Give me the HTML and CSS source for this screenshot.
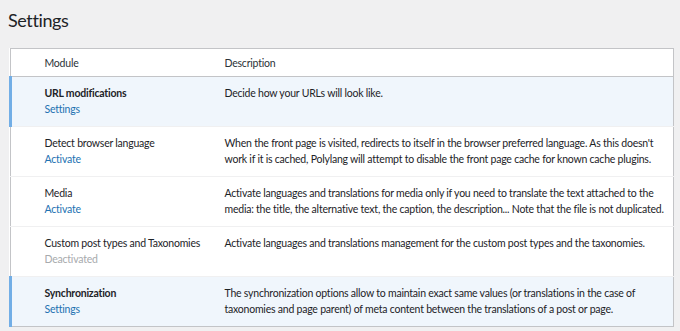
FILE: index.html
```html
<!DOCTYPE html>
<html lang="en">
<head>
    <meta charset="UTF-8">
    <title>Settings</title>
    <link rel="stylesheet" href="styles.css">
</head>
<body>
    <div class="wrap">
        <h1>Settings</h1>
        <table class="modules">
            <thead>
                <tr>
                    <td class="check-column"></td>
                    <th class="col-module">Module</th>
                    <th class="col-desc">Description</th>
                </tr>
            </thead>
            <tbody>
                <tr class="active">
                    <td class="check-column"></td>
                    <td class="col-module"><strong>URL modifications</strong><div class="row-actions"><a href="#">Settings</a></div></td>
                    <td class="col-desc">Decide how your URLs will look like.</td>
                </tr>
                <tr>
                    <td class="check-column"></td>
                    <td class="col-module">Detect browser language<div class="row-actions"><a href="#">Activate</a></div></td>
                    <td class="col-desc">When the front page is visited, redirects to itself in the browser preferred language. As this doesn't<br>work if it is cached, Polylang will attempt to disable the front page cache for known cache plugins.</td>
                </tr>
                <tr>
                    <td class="check-column"></td>
                    <td class="col-module">Media<div class="row-actions"><a href="#">Activate</a></div></td>
                    <td class="col-desc">Activate languages and translations for media only if you need to translate the text attached to the<br>media: the title, the alternative text, the caption, the description... Note that the file is not duplicated.</td>
                </tr>
                <tr>
                    <td class="check-column"></td>
                    <td class="col-module">Custom post types and Taxonomies<div class="row-actions"><span class="deactivated">Deactivated</span></div></td>
                    <td class="col-desc">Activate languages and translations management for the custom post types and the taxonomies.</td>
                </tr>
                <tr class="active">
                    <td class="check-column"></td>
                    <td class="col-module"><strong>Synchronization</strong><div class="row-actions"><a href="#">Settings</a></div></td>
                    <td class="col-desc">The synchronization options allow to maintain exact same values (or translations in the case of<br>taxonomies and page parent) of meta content between the translations of a post or page.</td>
                </tr>
            </tbody>
        </table>
    </div>
</body>
</html>
```

FILE: styles.css
```css
body {
    margin: 0;
    background: #f0f0f1;
    font-family: 'Lato', 'Noto Sans', sans-serif;
    font-size: 10.5px;
    letter-spacing: -0.22px;
    color: #3c434a;
}
.wrap {
    padding: 0 6px 0 9px;
}
h1 {
    margin: 0 0 0 -1px;
    padding: 8px 0 0;
    height: 48px;
    box-sizing: border-box;
    font-size: 18px;
    font-weight: 400;
    line-height: 24px;
    letter-spacing: -0.4px;
    color: #1d2327;
}
.modules {
    width: 100%;
    table-layout: fixed;
    border-collapse: collapse;
    background: #fff;
    border: 1px solid #c3c4c7;
}
.modules th,
.modules td {
    text-align: left;
    vertical-align: top;
    line-height: 16px;
    box-sizing: border-box;
}
.modules thead th {
    font-weight: 400;
    padding: 6px 10px 5px;
    color: #2c3338;
    border-bottom: 1px solid #c3c4c7;
}
.modules tbody td {
    padding: 8px 10px 9px;
    border-top: 1px solid #f0f0f1;
}
.modules thead td {
    border-bottom: 1px solid #c3c4c7;
}
.modules .check-column {
    width: 24px;
    padding: 0;
}
.col-module {
    width: 180px;
    color: #1d2327;
    white-space: nowrap;
}
.col-module strong {
    font-weight: 700;
}
.col-desc {
    color: #1d2327;
    white-space: nowrap;
}
.modules tr.active td {
    background: #f0f6fc;
}
.modules tr.active td.check-column {
    border-left: 3px solid #72aee6;
}
.row-actions a {
    color: #2271b1;
    text-decoration: none;
}
.deactivated {
    color: #a7aaad;
}
```
